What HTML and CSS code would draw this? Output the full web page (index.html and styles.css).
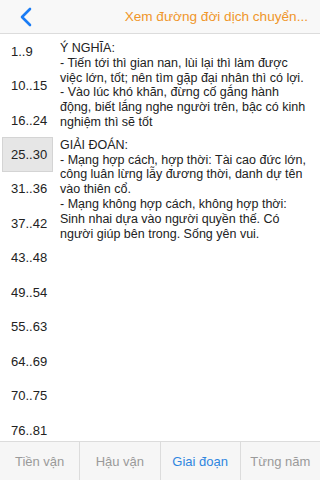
FILE: index.html
```html
<!DOCTYPE html>
<html lang="vi">
<head>
    <meta charset="UTF-8">
    <meta name="viewport" content="width=device-width, initial-scale=1.0">
    <title>Giai đoạn</title>
    <link rel="stylesheet" href="styles.css">
</head>
<body>
    <div class="navbar">
        <svg class="back" width="14" height="20" viewBox="0 0 14 20">
            <path d="M11 2 L3 10 L11 18" fill="none" stroke="#1a7cf5" stroke-width="2.6" stroke-linecap="round" stroke-linejoin="round"/>
        </svg>
        <span class="nav-link">Xem đường đời dịch chuyển...</span>
    </div>

    <div class="main">
        <ul class="ages">
            <li>1..9</li>
            <li>10..15</li>
            <li>16..24</li>
            <li class="active">25..30</li>
            <li>31..36</li>
            <li>37..42</li>
            <li>43..48</li>
            <li>49..54</li>
            <li>55..63</li>
            <li>64..69</li>
            <li>70..75</li>
            <li>76..81</li>
        </ul>
        <div class="content">
            <p>Ý NGHĨA:<br>
            - Tiến tới thì gian nan, lùi lại thì làm được<br>
            việc lớn, tốt; nên tìm gặp đại nhân thì có lợi.<br>
            - Vào lúc khó khăn, đừng cố gắng hành<br>
            động, biết lắng nghe người trên, bậc có kinh<br>
            nghiệm thì sẽ tốt</p>
            <p>GIẢI ĐOÁN:<br>
            - Mạng hợp cách, hợp thời: Tài cao đức lớn,<br>
            công luân lừng lẫy đương thời, danh dự tên<br>
            vào thiên cổ.<br>
            - Mạng không hợp cách, không hợp thời:<br>
            Sinh nhai dựa vào người quyền thế. Có<br>
            người giúp bên trong. Sống yên vui.</p>
        </div>
    </div>

    <div class="tabbar">
        <div class="tab">Tiền vận</div>
        <div class="tab">Hậu vận</div>
        <div class="tab selected">Giai đoạn</div>
        <div class="tab">Từng năm</div>
    </div>
</body>
</html>
```

FILE: styles.css
```css
body {
    margin: 0;
    width: 320px;
    height: 480px;
    font-family: "Liberation Sans", Arial, sans-serif;
    background-color: #fff;
    color: #222;
    display: flex;
    flex-direction: column;
    overflow: hidden;
}
.navbar {
    height: 33px;
    background-color: #f8f8f8;
    border-bottom: 1px solid #dcdcdc;
    display: flex;
    align-items: center;
    justify-content: space-between;
    padding: 0 12px 0 19px;
}
.back {
    display: block;
}
.nav-link {
    color: #f0962a;
    font-size: 13.6px;
}
.main {
    flex: 1;
    display: flex;
    overflow: hidden;
}
.ages {
    list-style: none;
    margin: 0;
    padding: 0 0 0 2px;
    width: 51px;
    flex-shrink: 0;
}
.ages li {
    height: 34.45px;
    box-sizing: border-box;
    display: flex;
    align-items: center;
    padding-left: 8px;
    font-size: 13px;
    border: 1px solid transparent;
}
.ages li.active {
    background-color: #e6e6e6;
    border-color: #d4d4d4;
}
.content {
    flex: 1;
    padding: 7px 4px 0 7px;
    font-size: 12.5px;
    line-height: 14.8px;
    white-space: nowrap;
}
.content p {
    margin: 0 0 8px;
}
.tabbar {
    height: 38px;
    display: flex;
    background-color: #f6f6f6;
    border-top: 1px solid #dcdcdc;
}
.tab {
    flex: 1;
    display: flex;
    align-items: center;
    justify-content: center;
    font-size: 13px;
    color: #9a9a9a;
    border-left: 1px solid #dcdcdc;
}
.tab:first-child {
    border-left: none;
}
.tab.selected {
    color: #2f86e0;
}
```
